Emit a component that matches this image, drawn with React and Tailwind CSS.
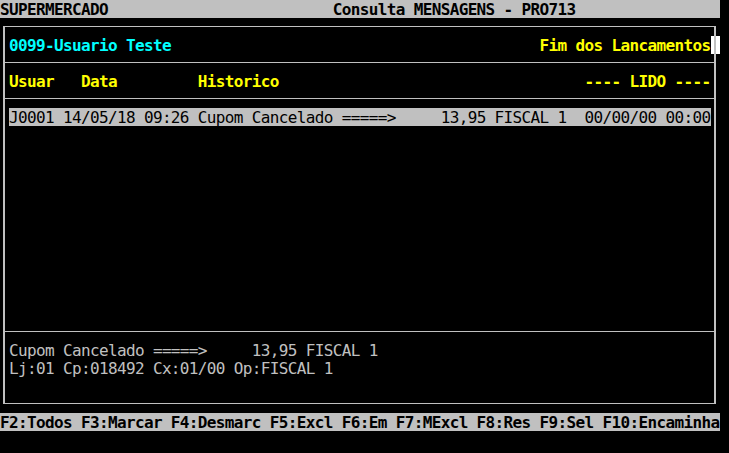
import React from "react";

const sp = (n) => " ".repeat(n);

function Row({ children, className = "" }) {
  return (
    <div className={"h-[18px] leading-[20px] whitespace-pre pl-[4px] " + className}>
      {children}
    </div>
  );
}

export default function App() {
  return (
    <div className="w-[729px] h-[453px] bg-black overflow-hidden font-['DejaVu_Sans_Mono',monospace] text-[16px] tracking-[-0.64px] text-[#c0c0c0]">
      <div className="w-[720px]">
        {/* top bar */}
        <div className="h-[18px] leading-[20px] bg-[#c0c0c0] text-black whitespace-pre font-bold">
          {"SUPERMERCADO" + sp(25) + "Consulta MENSAGENS - PRO713"}
        </div>

        {/* main box */}
        <div className="mt-[8px] ml-[3px] w-[713px] border-x-2 border-y border-[#c0c0c0]">
          <div className="pt-[9px] pb-[8px] border-b border-[#c0c0c0]">
            <Row className="relative font-bold">
              <span className="text-[#00ffff]">0099-Usuario Teste</span>
              {sp(41)}
              <span className="text-[#ffff00]">Fim dos Lancamentos</span>
              <span className="absolute left-[706px] top-0 h-[18px] w-[3px] bg-white" />
              <span className="absolute left-[711px] top-0 h-[18px] w-[4px] bg-white" />
            </Row>
          </div>
          <div className="pt-[9px] pb-[8px] border-b border-[#c0c0c0]">
            <Row className="text-[#ffff00] font-bold">
              {"Usuar" + sp(3) + "Data" + sp(9) + "Historico" + sp(34) + "---- LIDO ----"}
            </Row>
          </div>
          <div className="pt-[9px] pb-[8px] border-b border-[#c0c0c0] h-[233px]">
            <div className="pl-[4px]">
              <div className="h-[18px] w-[702px] bg-[#c0c0c0] text-black leading-[20px] whitespace-pre">
                {"J0001 14/05/18 09:26 Cupom Cancelado =====>" + sp(5) + "13,95 FISCAL 1" + sp(2) + "00/00/00 00:00"}
              </div>
            </div>
          </div>
          <div className="pt-[9px] pb-[8px]">
            <Row>{"Cupom Cancelado =====>" + sp(5) + "13,95 FISCAL 1"}</Row>
            <Row>{"Lj:01 Cp:018492 Cx:01/00 Op:FISCAL 1"}</Row>
            <Row>{" "}</Row>
          </div>
        </div>

        {/* bottom bar */}
        <div className="mt-[9px] h-[18px] leading-[20px] bg-[#c0c0c0] text-black whitespace-pre font-bold">
          {"F2:Todos F3:Marcar F4:Desmarc F5:Excl F6:Em F7:MExcl F8:Res F9:Sel F10:Encaminha"}
        </div>
      </div>
    </div>
  );
}
